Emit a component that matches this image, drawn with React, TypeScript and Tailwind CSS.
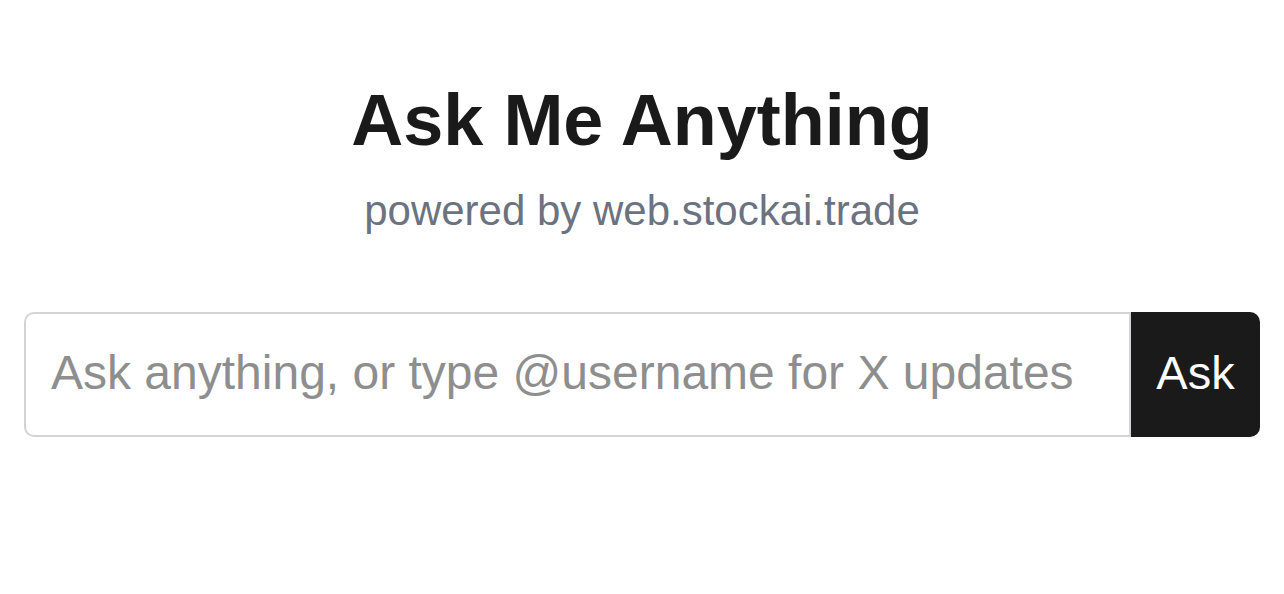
export default function App() {
  return (
    <div
      className="min-h-[594px] bg-white px-6 pt-[84px]"
      style={{ fontFamily: '"Liberation Sans", Arial, sans-serif' }}
    >
      <h1 className="text-center text-[72px] leading-[72px] font-bold text-[#1a1a1a]">
        Ask Me Anything
      </h1>
      <p className="mt-[34px] text-center text-[42px] leading-[42px] text-[#6b7280]">
        powered by web.stockai.trade
      </p>
      <form className="mt-[80px] flex h-[125px]" onSubmit={(e) => e.preventDefault()}>
        <input
          type="text"
          placeholder="Ask anything, or type @username for X updates"
          className="min-w-0 flex-1 rounded-l-[10px] border-2 border-[#d4d4d8] bg-white px-[25px] pb-[3px] text-[48px] text-[#1a1a1a] outline-none placeholder:text-[#8e8e8e]"
        />
        <button
          type="submit"
          className="w-[129px] shrink-0 rounded-r-[10px] bg-[#1a1a1a] pb-[3px] text-[47px] text-white"
        >
          Ask
        </button>
      </form>
    </div>
  );
}
